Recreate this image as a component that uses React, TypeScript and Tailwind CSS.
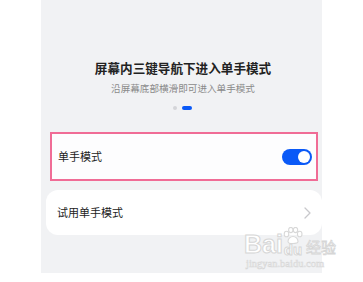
import React from 'react';

const FONT = '"Noto Sans CJK SC", "Noto Sans", sans-serif';

function Toggle() {
  return (
    <div className="flex h-[16px] w-[30px] items-center justify-end rounded-full bg-[#0a59f7] pr-[2px]">
      <div className="h-[12px] w-[12px] rounded-full bg-white" />
    </div>
  );
}

function Chevron() {
  return (
    <svg width="7" height="12" viewBox="0 0 7 12" fill="none">
      <path d="M1 1l5 5-5 5" stroke="#c8c8cc" strokeWidth="1.3" strokeLinecap="round" strokeLinejoin="round" />
    </svg>
  );
}

function Paw() {
  return (
    <svg width="20" height="17" viewBox="0 0 20 17" fill="white" stroke="#d8d8d8" strokeWidth="1.1">
      <ellipse cx="3.5" cy="7" rx="2.3" ry="2.8" />
      <ellipse cx="7.8" cy="3" rx="2.2" ry="2.6" />
      <ellipse cx="12.5" cy="3" rx="2.2" ry="2.6" />
      <ellipse cx="16.7" cy="7" rx="2.3" ry="2.8" />
      <path d="M5 14.5c0-3 2.5-5 5-5s5 2 5 5c0 1.8-2 2-5 2s-5-.2-5-2z" />
    </svg>
  );
}

export default function App() {
  return (
    <div className="relative h-[282px] w-[363px] overflow-hidden bg-white" style={{ fontFamily: FONT }}>
      <div className="ml-[41px] flex h-[273px] w-[281px] flex-col bg-[#f1f2f4]">
        <div className="pl-[3px] pt-[60px] text-center text-[12.6px] font-bold leading-[16px] text-[#222]">
          屏幕内三键导航下进入单手模式
        </div>
        <div className="mt-[5px] pl-[3px] text-center text-[9.6px] leading-[14px] text-[#8a8a8a]">
          沿屏幕底部横滑即可进入单手模式
        </div>
        <div className="mt-[11px] flex items-center justify-center gap-[5px] pl-[1px]">
          <div className="h-[4px] w-[4px] rounded-full bg-[#d4d5d8]" />
          <div className="h-[4px] w-[10px] rounded-full bg-[#0a59f7]" />
        </div>

        <div className="ml-[9px] mt-[22px] flex h-[49px] w-[268px] items-center justify-between border-2 border-[#f06c96] bg-[#fdfdfe] pl-[6px] pr-[4px]">
          <span className="text-[11px] text-[#222]">单手模式</span>
          <Toggle />
        </div>

        <div className="ml-[5px] mt-[9px] flex h-[45px] w-[276px] items-center justify-between rounded-[12px] bg-white pl-[11px] pr-[11px]">
          <span className="text-[11px] text-[#222]">试用单手模式</span>
          <Chevron />
        </div>
      </div>

      <div className="absolute left-[244px] top-[227px] flex flex-col items-start">
        <div className="flex items-end">
          <span className="text-[25px] font-bold leading-[25px] text-white [-webkit-text-stroke:1px_#d6d6d6]" style={{ fontFamily: '"Liberation Sans", sans-serif' }}>Bai</span>
          <div className="flex flex-col items-center">
            <Paw />
            <span className="-mt-[1px] text-[15px] font-bold leading-[14px] text-white [-webkit-text-stroke:1px_#d6d6d6]" style={{ fontFamily: '"Liberation Sans", sans-serif' }}>du</span>
          </div>
          <span className="ml-[3px] text-[15px] leading-[20px] text-white [-webkit-text-stroke:0.8px_#d6d6d6]">经验</span>
        </div>
        <span className="ml-[2px] mt-[1px] text-[10.5px] leading-[11px] text-white [-webkit-text-stroke:0.6px_#d8d8d8]" style={{ fontFamily: '"Liberation Serif", serif' }}>jingyan.baidu.com</span>
      </div>
    </div>
  );
}
